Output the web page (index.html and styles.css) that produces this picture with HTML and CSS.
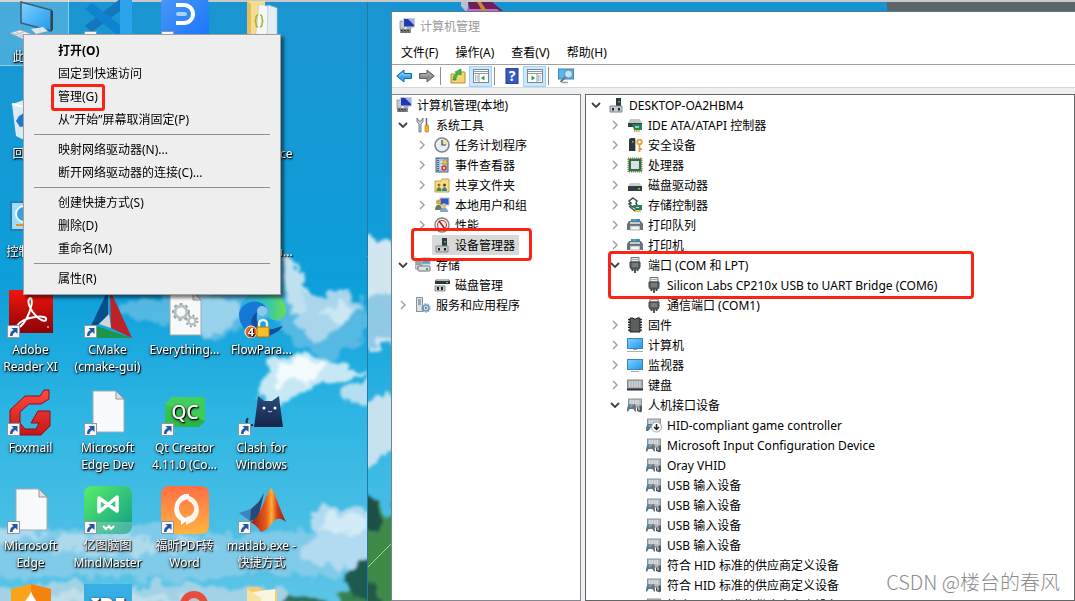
FILE: index.html
```html
<!DOCTYPE html>
<html lang="zh-CN">
<head>
  <meta charset="UTF-8" />
  <meta name="viewport" content="width=device-width, initial-scale=1.0"/>
  <title>计算机管理</title>
  <link rel="stylesheet" href="styles.css">
</head>
<body>

  <!-- icon library -->
  <svg class="defs" aria-hidden="true">
    <defs>
      <linearGradient id="g-red" x1="0" y1="0" x2="0" y2="1"><stop offset="0" stop-color="#f5140c"/><stop offset="1" stop-color="#8a0406"/></linearGradient>
      <linearGradient id="g-fox" x1="0" y1="0" x2="0" y2="1"><stop offset="0" stop-color="#ff4a40"/><stop offset="1" stop-color="#c5161a"/></linearGradient>
      <linearGradient id="g-mind" x1="0" y1="0" x2="1" y2="1"><stop offset="0" stop-color="#58ee68"/><stop offset="1" stop-color="#109a8c"/></linearGradient>
      <linearGradient id="g-pdf" x1="0" y1="0" x2="0" y2="1"><stop offset="0" stop-color="#ff6f45"/><stop offset="1" stop-color="#ffb340"/></linearGradient>
      <linearGradient id="g-blue" x1="0" y1="0" x2="1" y2="1"><stop offset="0" stop-color="#4a97f5"/><stop offset="1" stop-color="#1673fb"/></linearGradient>
      <linearGradient id="g-screen" x1="0" y1="0" x2="1" y2="1"><stop offset="0" stop-color="#7fd2ff"/><stop offset="1" stop-color="#1f98ee"/></linearGradient>
      <linearGradient id="g-cat" x1="0" y1="0" x2="0" y2="1"><stop offset="0" stop-color="#2c4a7c"/><stop offset="1" stop-color="#15254a"/></linearGradient>
      <linearGradient id="g-qt" x1="0" y1="0" x2="1" y2="1"><stop offset="0" stop-color="#3cc95c"/><stop offset="1" stop-color="#28b03e"/></linearGradient>
      <linearGradient id="g-edge" x1="0" y1="0" x2="1" y2="0"><stop offset="0" stop-color="#2aa8e8"/><stop offset=".6" stop-color="#35c5b4"/><stop offset="1" stop-color="#6ade4e"/></linearGradient>
      <linearGradient id="g-mat" x1="0" y1="0" x2="1" y2="0"><stop offset="0" stop-color="#8a1c10"/><stop offset=".45" stop-color="#ef5a1c"/><stop offset=".6" stop-color="#ffb13a"/><stop offset=".75" stop-color="#d8421a"/><stop offset="1" stop-color="#8c1a12"/></linearGradient>

      <symbol id="shortcut" viewBox="0 0 13 13">
        <rect x=".5" y=".5" width="12" height="12" fill="#f4f6f8" stroke="#8c98a4"/>
        <path d="M4.500 3h6v6l-2-2c-2 1-3 2-3 4h-2.500c0-3 1-5 3.500-6z" fill="#2456a4"/>
      </symbol>

      <symbol id="a-pc" viewBox="0 0 48 48">
        <path d="M14 5l30 8v21l-30-8z" fill="url(#g-screen)" stroke="#3f5b70" stroke-width="1.500"/>
        <path d="M44 13l2 1v19l-2 1z" fill="#33434e"/>
        <path d="M24 32l12-2 5 4-12 3z" fill="#dfe5e9"/>
        <path d="M3 36l10-3 14 5-11 4z" fill="#eef2f4" stroke="#9aa7b0" stroke-width=".7"/>
        <path d="M6 36l14 5M9 35l14 5M8 38l9-3M13 40l9-3" stroke="#9aa7b0" stroke-width=".6"/>
      </symbol>
      <symbol id="a-vscode" viewBox="0 0 48 48">
        <path d="M36 0h12v48h-12z" fill="#2aa3ec"/>
        <path d="M36 3v12L8 36l-7-6z" fill="#1277bd"/>
        <path d="M1 13l7-6 28 22v12z" fill="#0e83cf"/>
      </symbol>
      <symbol id="a-d" viewBox="0 0 48 48">
        <rect width="48" height="48" rx="8" fill="url(#g-blue)"/>
        <path d="M15 9h8a9 9 0 0 1 0 18h-8" fill="none" stroke="#fff" stroke-width="4"/>
        <rect x="15" y="16" width="11" height="4" rx="2" fill="#a9d1ff"/>
      </symbol>
      <symbol id="a-folder" viewBox="0 0 48 48">
        <path d="M9 5h18v40h-18z" fill="#f6dc8c"/>
        <path d="M9 5l4 3v38l-4-2z" fill="#e3be5a"/>
        <path d="M21 8l12 3v34h-16z" fill="#f4f6f8" stroke="#c0c8ce" stroke-width=".7"/>
        <path d="M30 9l9 3v33h-10z" fill="#e4edf3" stroke="#b5c0c8" stroke-width=".7"/>
        <path d="M20 19q-2 0-2 3t-1.500 3q1.500 0 1.500 3t2 3M22 19q2 0 2 3t1.500 3q-1.500 0-1.500 3t-2 3" fill="none" stroke="#a8b428" stroke-width="1.500"/>
      </symbol>
      <symbol id="a-folder2" viewBox="0 0 48 48">
        <path d="M9 3h12l3 3h15v40H9z" fill="#f0cf74"/>
        <path d="M15 8l22-3v36H15z" fill="#fbf4dc"/>
        <path d="M9 5l14 9v34L9 44z" fill="#f9e3a0"/>
      </symbol>
      <symbol id="a-bin" viewBox="0 0 48 48">
        <path d="M5 10l12-4 25 3-5 34-22 2-6-3z" fill="#dcebf2"/>
        <path d="M5 10l12 3 25-4" fill="none" stroke="#fff" stroke-width="2"/>
        <path d="M12 22l5-3 4 6-4 1 2 6-6 1-4-6z" fill="#1f78d2"/>
      </symbol>
      <symbol id="a-control" viewBox="0 0 48 48">
        <rect x="4" y="10" width="42" height="28" fill="#9bdcfa" stroke="#2c78b0" stroke-width="2"/>
        <circle cx="17" cy="22" r="8" fill="#3c9ee0" stroke="#f2fbff" stroke-width="2"/>
        <path d="M17 22v-8a8 8 0 0 1 8 8z" fill="#f2fbff"/>
        <path d="M9 33h12" stroke="#f08c2a" stroke-width="2"/>
      </symbol>
      <symbol id="a-adobe" viewBox="0 0 48 48">
        <rect x="2" y="0" width="44" height="43" fill="url(#g-red)"/>
        <path d="M10 36c3-5 11-8 18-9 8-1 12 0 11 3-1 2-6 0-10-4-5-5-9-13-7-17 2-3 4 1 2 8-2 8-6 15-10 19-2 2-5 2-4 0z" fill="none" stroke="#fff" stroke-width="2"/>
        <path d="M41 36v2" stroke="#fff"/>
      </symbol>
      <symbol id="a-cmake" viewBox="0 0 48 48">
        <path d="M24 0L3 44l21-18z" fill="#064f8d"/>
        <path d="M26 0l22 48-21-10z" fill="#be2128"/>
        <path d="M12 36l36 12H3z" fill="#1d9447"/>
        <path d="M25 24l2 14-12-4z" fill="#d2d6da"/>
      </symbol>
      <symbol id="a-gears" viewBox="0 0 48 48">
        <path d="M9 2h23l8 8v35H9z" fill="#f7f8f8" stroke="#a3abb0"/>
        <path d="M32 2v8h8z" fill="#dde0e2" stroke="#8d969b"/>
        <circle cx="20" cy="22" r="6" fill="#f7f8f8" stroke="#b9c0c4" stroke-width="3"/>
        <circle cx="20" cy="22" r="8" fill="none" stroke="#9da5aa" stroke-width="2" stroke-dasharray="3 3"/>
        <circle cx="31" cy="31" r="3.500" fill="#f7f8f8" stroke="#b9c0c4" stroke-width="2.500"/>
        <circle cx="31" cy="31" r="5.500" fill="none" stroke="#9da5aa" stroke-width="2" stroke-dasharray="2 2.300"/>
      </symbol>
      <symbol id="a-edge" viewBox="0 0 48 48">
        <path d="M1 26C1 10 12 1 25 1s23 9 23 19c0 7-5 10-11 10-5 0-7-2-6-4 3-8-4-13-12-12C9 15 4 20 1 26z" fill="url(#g-edge)"/>
        <path d="M1 24c2-8 10-14 19-12 5 1 8 4 8 6-7-1-10 5-9 12 1 8 7 14 15 16-18 5-33-6-33-22z" fill="#1478d4"/>
        <path d="M19 22c-3 13 7 22 22 15l4-1c-6 8-16 12-24 9-9-4-11-16-2-23z" fill="#164e9e"/>
        <circle cx="24" cy="21" r="5" fill="#8cc8ea"/>
        <circle cx="13" cy="42" r="6" fill="#f36c18" stroke="#fff"/>
        <text x="13" y="46" font-size="11" font-weight="700" font-family="Noto Sans" text-anchor="middle" fill="#fff">4</text>
        <path d="M21 37v-3a4 4 0 0 1 8 0v3" fill="none" stroke="#f0f2f4" stroke-width="2.500"/>
        <rect x="19" y="37" width="12" height="10" fill="#f8bf27" stroke="#b27a0a"/>
      </symbol>
      <symbol id="a-fox" viewBox="0 0 48 48">
        <path d="M42 2v9l-8 5H22l-9 8v11l5 6h11l3-6h-8l7-12h12v15l-9 9H13L3 40V22L18 8h15l4-6z" fill="url(#g-fox)" stroke="#8d1014"/>
      </symbol>
      <symbol id="a-page" viewBox="0 0 48 48">
        <path d="M9 3h23l8 8v33H9z" fill="#f8f9fa" stroke="#a3abb0"/>
        <path d="M32 3v8h8z" fill="#dde0e2" stroke="#8d969b"/>
      </symbol>
      <symbol id="a-qt" viewBox="0 0 48 48">
        <path d="M11 9h33v24l-6 6H4V16z" fill="url(#g-qt)"/>
        <path d="M4 16l7-7h33v24z" fill="#4ad864" opacity=".6"/>
        <text x="24" y="31" font-size="19" font-weight="500" font-family="Noto Sans" text-anchor="middle" fill="#fff">QC</text>
      </symbol>
      <symbol id="a-cat" viewBox="0 0 48 48">
        <path d="M16 39l3-22 1-9 6 5h8l7-5 1 9 3 22z" fill="url(#g-cat)"/>
        <path d="M15 37c-6 1-8-3-5-7" fill="none" stroke="#1c2c50" stroke-width="2"/>
        <circle cx="26" cy="20" r="1.500" fill="#fff"/><circle cx="37" cy="20" r="1.500" fill="#fff"/>
        <path d="M30 23l2 1 2-1" fill="none" stroke="#c5cede"/>
      </symbol>
      <symbol id="a-mind" viewBox="0 0 48 48">
        <rect width="48" height="48" rx="8" fill="url(#g-mind)"/>
        <path d="M0 36h48v4a8 8 0 0 1-8 8H8a8 8 0 0 1-8-8z" fill="#fff" opacity=".22"/>
        <path d="M15 26V12l18 13V11L15 26z" fill="none" stroke="#fff" stroke-width="3.500" stroke-linejoin="round"/>
        <path d="M19 40l3 3 3-3 2 3 3-3" fill="none" stroke="#fff" stroke-width="2"/>
      </symbol>
      <symbol id="a-pdf" viewBox="0 0 48 48">
        <rect width="48" height="48" rx="8" fill="url(#g-pdf)"/>
        <path d="M24 8a16 16 0 0 0-10 20c1 3 3 5 6 7v4l8-6c-12-2-13-16-4-19l4-1V8z" fill="#fff"/>
        <path d="M28 10c11 3 14 19 3 26l-6 3 0-8c10-1 11-13 2-16z" fill="#fff5ea"/>
      </symbol>
      <symbol id="a-matlab" viewBox="0 0 48 48">
        <path d="M1 27l12-4 9-9-5 16-5 5z" fill="#3f82bd"/>
        <path d="M13 23l7-6 6-10-6 26-8 2z" fill="#234a78"/>
        <path d="M33 2c4 4 8 20 15 34-6-5-10-4-14 1-3 5-7 8-11 9-3-4-6-8-11-10 11-3 15-28 21-34z" fill="url(#g-mat)"/>
      </symbol>
      <symbol id="a-shield" viewBox="0 0 48 48">
        <path d="M4 5l20-5 20 5v25c0 10-20 18-20 18S4 40 4 30z" fill="#f9a31c"/>
        <path d="M24 0l20 5v25c0 10-20 18-20 18z" fill="#f5830f"/>
        <path d="M24 7c1 6 7 9 7 17h-13c-3-8 5-10 6-17z" fill="#fff"/>
      </symbol>
      <symbol id="a-ide" viewBox="0 0 48 48">
        <rect width="48" height="48" fill="#36aee4"/>
        <text x="24" y="28" font-size="20" font-weight="900" font-family="Noto Sans" text-anchor="middle" fill="#fff">IDE</text>
      </symbol>
      <symbol id="a-ring" viewBox="0 0 48 48">
        <circle cx="33" cy="21" r="14" fill="#e84c3d"/><circle cx="33" cy="21" r="7" fill="#b9c7cf"/>
      </symbol>

      <!-- 16px icons -->
      <symbol id="i-open" viewBox="0 0 16 16"><path d="M4 6l4 4 4-4" fill="none" stroke="#404040" stroke-width="1.800"/></symbol>
      <symbol id="i-closed" viewBox="0 0 16 16"><path d="M6 4l4 4-4 4" fill="none" stroke="#a3a3a3" stroke-width="1.500"/></symbol>
      <symbol id="i-mgmt" viewBox="0 0 16 16">
        <rect x="1" y="3" width="4" height="8" fill="#c5cacd" stroke="#7b858c" stroke-width=".7"/>
        <rect x="4.500" y=".5" width="11" height="8.500" fill="#2438b4" stroke="#c9ced2"/>
        <path d="M9 1h6v6z" fill="#9fb2f4"/>
        <path d="M8 9h4l1 2H7z" fill="#aab2b7"/>
        <rect x="1" y="11" width="11" height="4" fill="#83898d"/><path d="M2 12.500h9M3 14h7" stroke="#3b4044" stroke-dasharray="2 1"/>
      </symbol>
      <symbol id="i-tools" viewBox="0 0 16 16">
        <path d="M2 1v4l2 2v8h2V7l2-2V1L6 4H4z" fill="#c9cfd3" stroke="#5f676c" stroke-width=".8"/>
        <path d="M11.500 1v7" stroke="#62696e" stroke-width="1.500"/><rect x="10" y="8" width="3.500" height="7" rx="1" fill="#f3b21e" stroke="#a56c08" stroke-width=".6"/>
      </symbol>
      <symbol id="i-clock" viewBox="0 0 16 16">
        <circle cx="8" cy="8" r="7" fill="#e6edf4" stroke="#80878c" stroke-width="1.600"/>
        <path d="M8 8V2.500A5.500 5.500 0 0 1 13.500 8z" fill="#f3dca0"/><path d="M8 3v5h4" fill="none" stroke="#3e464c" stroke-width="1.200"/>
      </symbol>
      <symbol id="i-event" viewBox="0 0 16 16">
        <rect x="2" y="1" width="12" height="14" fill="#a9c0dc" stroke="#4b6484"/>
        <path d="M4 1v14" stroke="#2f4a6e" stroke-width="1.500" stroke-dasharray="1 1"/><path d="M6 5h3M6 8h3M6 11h2" stroke="#fff"/>
        <path d="M11 2l3 5H8z" fill="#f7cb2c" stroke="#946c08" stroke-width=".5"/><circle cx="10" cy="11" r="2.700" fill="#d6392d"/><path d="M9 10l2 2m0-2l-2 2" stroke="#fff" stroke-width=".8"/>
      </symbol>
      <symbol id="i-share" viewBox="0 0 16 16">
        <path d="M1 4h6l1-2h7v13H1z" fill="#f7dc86" stroke="#b88f2b" stroke-width=".8"/>
        <circle cx="5" cy="8" r="1.500" fill="#b2622b"/><path d="M2.500 14c0-5 5-5 5 0z" fill="#3b8d48"/>
        <circle cx="10.500" cy="8" r="1.500" fill="#6b3c1d"/><path d="M8 14c0-5 5-5 5 0z" fill="#3876b8"/>
      </symbol>
      <symbol id="i-users" viewBox="0 0 16 16">
        <rect x="6" y="1" width="9" height="7" fill="#2d58cb" stroke="#bcc4ca"/>
        <circle cx="4.500" cy="5" r="2.500" fill="#d7a154"/><path d="M1 13c0-7 7-7 7 0z" fill="#69804c"/>
        <circle cx="10" cy="8.500" r="2.300" fill="#e7bb82"/><path d="M6 15c0-6 8-6 8 0z" fill="#7ba6cf"/>
      </symbol>
      <symbol id="i-perf" viewBox="0 0 16 16">
        <circle cx="8" cy="8" r="7" fill="#f3f4f5" stroke="#7d8488" stroke-width="1.400"/><circle cx="8" cy="8" r="4.500" fill="none" stroke="#d03a32" stroke-width="1.200"/><path d="M5 4l6 8" stroke="#a3201b" stroke-width="1.500"/>
      </symbol>
      <symbol id="i-dev" viewBox="0 0 16 16">
        <rect x="8" y="1" width="5" height="9" fill="#33393c"/><rect x="10" y="4" width="2" height="1.500" fill="#43c14c"/>
        <path d="M2 9h12v6H2z" fill="#c6cbce" stroke="#7f878b"/><rect x="4" y="11" width="2" height="2.500" fill="#222"/><rect x="10" y="11" width="2" height="2.500" fill="#222"/>
      </symbol>
      <symbol id="i-storage" viewBox="0 0 16 16">
        <path d="M0 3h7v9H0z" fill="#c8cdd1" stroke="#80878c" stroke-width=".7"/><path d="M1 5h5M1 7h5" stroke="#6d7478"/>
        <rect x="7" y="1" width="8" height="6" fill="#4fa4d9" stroke="#9eb1bd"/><rect x="3" y="9" width="12" height="5" rx="1" fill="#dfe2e4" stroke="#687075"/><rect x="11" y="11" width="2" height="2" fill="#2cb340"/>
      </symbol>
      <symbol id="i-diskmgmt" viewBox="0 0 16 16">
        <path d="M3 2h11l2 2v3H1V4z" fill="#2f3538"/><path d="M3 2h11l1 2H2z" fill="#b8bdc0"/><rect x="12" y="5" width="2" height="1" fill="#4be653"/>
        <path d="M1 9h10v5H1z" fill="#d0d4d6" stroke="#7f878b"/><rect x="3" y="10" width="2" height="3" fill="#222"/><rect x="7" y="10" width="2" height="3" fill="#222"/>
      </symbol>
      <symbol id="i-service" viewBox="0 0 16 16">
        <rect x="1.500" y=".5" width="6" height="14" fill="#dce2e6" stroke="#88949c"/><path d="M3 3h3M3 5h3M3 7h3" stroke="#5d6a72"/>
        <circle cx="11" cy="11" r="3" fill="#d5e7f6" stroke="#6d93b5" stroke-width="1.500"/><circle cx="11" cy="11" r="4.300" fill="none" stroke="#6d93b5" stroke-dasharray="1.500 1.500"/><circle cx="11" cy="11" r="1" fill="#3d6e9d"/>
      </symbol>
      <symbol id="i-ide" viewBox="0 0 16 16">
        <path d="M3 2h10l2 4H1z" fill="#bfc4c7"/><path d="M1 6h14v4H1z" fill="#393f42"/>
        <path d="M5 7h10v6H7z" fill="#25815d"/><path d="M8 9h4v2H8z" fill="#8fd0ac"/><path d="M7 14h6" stroke="#e6ab25" stroke-width="2" stroke-dasharray="1.500 .6"/>
      </symbol>
      <symbol id="i-security" viewBox="0 0 16 16">
        <path d="M2 2l2-1h4v13H2z" fill="#303639"/><rect x="5" y="4" width="1.500" height="1.500" fill="#48dc50"/><path d="M8.500 2v12" stroke="#b0b7ba"/>
        <circle cx="12.500" cy="5" r="2.300" fill="none" stroke="#dda03c" stroke-width="1.800"/><path d="M12.500 7v8M13 12h2" stroke="#dda03c" stroke-width="1.800"/>
      </symbol>
      <symbol id="i-cpu" viewBox="0 0 16 16">
        <rect x="1" y="1" width="14" height="14" fill="none" stroke="#c49c39" stroke-width="1.500" stroke-dasharray="1 1"/>
        <rect x="1.500" y="1.500" width="13" height="13" fill="#2f6d4c"/><rect x="4" y="4" width="8" height="8" fill="#dde0df"/>
      </symbol>
      <symbol id="i-drive" viewBox="0 0 16 16"><path d="M3 6h10l2 3H1z" fill="#cbd0d3"/><path d="M1 9h14v5H1z" fill="#363c40"/><rect x="11" y="11" width="2" height="1.500" fill="#4de653"/></symbol>
      <symbol id="i-storctl" viewBox="0 0 16 16">
        <path d="M6 1l4 3-1 2 1 2-4 2-4-3 2-1-2-2z" fill="#fff" stroke="#42494d" stroke-width="1.500"/>
        <path d="M2 9l6 5" stroke="#42494d" stroke-width="1.500"/><path d="M6 8h9v5H8z" fill="#25815d"/><path d="M9 10h3v1H9z" fill="#b9e5cc"/><path d="M8 14h6" stroke="#e6ab25" stroke-width="2" stroke-dasharray="1.500 .6"/>
      </symbol>
      <symbol id="i-printer" viewBox="0 0 16 16">
        <path d="M4 2h9v3H4z" fill="#2790e4"/><path d="M6 2h3v3H6z" fill="#3cc764"/>
        <path d="M2 4h12l2 3v6h-3V9H3v4H0V7z" fill="#697176"/><path d="M3 6h10" stroke="#c5cacd" stroke-width="2"/><path d="M4 9h8l1 4H3z" fill="#f3f5f6" stroke="#8f979c" stroke-width=".7"/>
      </symbol>
      <symbol id="i-port" viewBox="0 0 16 16">
        <path d="M4 .5h8V5H4z" fill="#e9ebec" stroke="#717678"/><path d="M5.500 2.500h5" stroke="#666" stroke-dasharray="1 1"/>
        <path d="M3 5h10v5l-1 2H4l-1-2z" fill="#5b6063" stroke="#3f4446"/><path d="M5 7h6M5 9h6" stroke="#a0a5a7" stroke-width=".8"/><path d="M5.500 12v2M8 12v4M10.500 12v2" stroke="#3f4446" stroke-width="1.800"/>
      </symbol>
      <symbol id="i-firmware" viewBox="0 0 16 16">
        <path d="M3 1h3l1 1h2l1-1h3v14H3z" fill="#5c5f60" stroke="#202122"/><path d="M2 2v13M14 2v13" stroke="#202122" stroke-width="2" stroke-dasharray="1.300 1.300"/>
      </symbol>
      <symbol id="i-pc" viewBox="0 0 16 16"><rect x=".5" y="1.500" width="15" height="10" fill="url(#g-screen)" stroke="#3d85b4"/><path d="M6 12h4v1H6z" fill="#8ca1ae"/><path d="M0 14.500h16" stroke="#a5b5c0"/></symbol>
      <symbol id="i-monitor" viewBox="0 0 16 16"><rect x=".5" y="2.500" width="15" height="10" fill="url(#g-screen)" stroke="#3d85b4"/><path d="M4 14.500h8" stroke="#9aadb9"/></symbol>
      <symbol id="i-keyboard" viewBox="0 0 16 16"><rect x=".5" y="3" width="15" height="9" fill="#a8afb5" stroke="#7e878e"/><path d="M2 5h12M2 7h12M2 9h12" stroke="#f4f6f7" stroke-dasharray="1.500 1"/><path d="M0 12.500h16" stroke="#292f34" stroke-width="2"/></symbol>
      <symbol id="i-hid" viewBox="0 0 16 16">
        <rect x="1.500" y="2" width="13" height="8" fill="#b5bcc2" stroke="#8b949b"/><path d="M3 4h10M3 6h10" stroke="#fff" stroke-dasharray="1.500 1"/>
        <path d="M0 15c0-5 1-8 3-8l2 1 2-1c2 0 2 3 2 8l-1.500-1L6.500 12h-4l-1 2z" fill="#66737d"/><circle cx="4" cy="9" r="1.600" fill="#3ab0ec"/><circle cx="7" cy="8.500" r="1" fill="#ea5a2d"/>
        <path d="M10 14v-3q1-2 1.500 0v2q1 2 1-1V9q2-2 2.500 1v4q-1 2-2.500 1z" fill="#4a555d"/>
      </symbol>
      <symbol id="i-game" viewBox="0 0 16 16">
        <rect x="1.500" y="2" width="13" height="8" fill="#b5bcc2" stroke="#8b949b"/><path d="M3 4h10M3 6h10" stroke="#fff" stroke-dasharray="1.500 1"/>
        <path d="M0 14c0-5 1-7 3-7h3l-2 5-2 2z" fill="#64707a"/><circle cx="3.500" cy="9" r="1.300" fill="#3ab0ec"/>
        <circle cx="10.500" cy="10" r="5" fill="#fff" stroke="#8a9297" stroke-width=".8"/><path d="M10.500 7v5.500M8 10l2.500 2.500L13 10" fill="none" stroke="#222" stroke-width="1.500"/>
      </symbol>
      <symbol id="i-back" viewBox="0 0 16 16"><path d="M8 2v3.500h7.500v5H8V14L.7 8z" fill="#39a9ea" stroke="#1767a6"/><path d="M3 8l4-3v2h7" fill="none" stroke="#9bdbfa"/></symbol>
      <symbol id="i-fwd" viewBox="0 0 16 16"><path d="M8 2v3.500H.5v5H8V14l7.300-6z" fill="#8e8e8e" stroke="#606060"/><path d="M2 7h7V5l3 3" fill="none" stroke="#bcbcbc"/></symbol>
      <symbol id="i-up" viewBox="0 0 16 16"><path d="M1 6h6l1-2h7v11H1z" fill="#f4d676" stroke="#b9903a"/><path d="M3 12c0-4 2-6 4-7L5 4l6-3v6L9 6c-3 2-3 4-3 6z" fill="#42bd3d" stroke="#247e26" stroke-width=".6"/></symbol>
      <symbol id="i-tree" viewBox="0 0 16 16"><rect x=".5" y="1.500" width="15" height="13" fill="#fff" stroke="#7b8790"/><path d="M1 3.500h14M1 5.500h14" stroke="#8d99a1" stroke-width="1.200"/><path d="M6 6v8" stroke="#8d99a1"/><path d="M2 8h3M2 10h3M2 12h3" stroke="#4a79a8" stroke-dasharray="1 .7"/><path d="M11.500 7.500v5L8 10z" fill="#2fa336"/></symbol>
      <symbol id="i-pane" viewBox="0 0 16 16"><rect x=".5" y="1.500" width="15" height="13" fill="#fff" stroke="#7b8790"/><path d="M1 3.500h14M1 5.500h14" stroke="#8d99a1" stroke-width="1.200"/><path d="M10 6v8" stroke="#8d99a1"/><path d="M11 8h3M11 10h3M11 12h3" stroke="#4a79a8" stroke-dasharray="1 .7"/><path d="M4.500 7.500v5L8 10z" fill="#2fa336"/></symbol>
      <symbol id="i-help" viewBox="0 0 16 16"><rect x="2" y="0" width="12" height="16" fill="#3859bd" stroke="#22368a"/><text x="8" y="13" font-size="14" font-weight="700" font-family="Noto Sans" text-anchor="middle" fill="#fff">?</text></symbol>
      <symbol id="i-scan" viewBox="0 0 16 16"><rect x=".5" y="1" width="15" height="10" fill="#55b7f0" stroke="#3d85b4"/><path d="M4 14.500h6" stroke="#8a9ca8" stroke-width="1.500"/><circle cx="10.500" cy="6" r="4" fill="#bde5fb" stroke="#738b9a"/><path d="M7.500 9l-5 5" stroke="#667680" stroke-width="1.800"/></symbol>
    </defs>
  </svg>

  <div class="desktop">
    <svg class="wallpaper" viewBox="0 0 391 601" preserveAspectRatio="xMinYMin slice" aria-hidden="true">
      <defs>
        <linearGradient id="sky" x1="0" y1="0" x2="0" y2="1">
          <stop offset="0" stop-color="#1b95d2"/><stop offset=".48" stop-color="#0d9fda"/><stop offset=".7" stop-color="#2fb6e3"/><stop offset="1" stop-color="#5cc4e6"/>
        </linearGradient>
        <filter id="paint" x="-20%" y="-20%" width="140%" height="140%">
          <feTurbulence type="fractalNoise" baseFrequency=".06" numOctaves="5" seed="7" result="n"/>
          <feDisplacementMap in="SourceGraphic" in2="n" scale="22" xChannelSelector="R" yChannelSelector="G"/>
          <feGaussianBlur stdDeviation="1.500"/>
        </filter>
      </defs>
      <rect width="391" height="601" fill="url(#sky)"/>
      <g filter="url(#paint)">
        <path d="M120 304l60-12 90-40 20 16 20 30 50 0 10 20-14 26-30 16-30-16-20-24-60 16-40-14-56-4z" fill="#6fc0e6" opacity=".7"/>
        <path d="M190 296l40 0 10 24-30 18-30-14z" fill="#b5dcee" opacity=".7"/>
        <path d="M284 255l14 8 12 28 34 12-10 14-44-4z" fill="#bfe0ef"/>
        <path d="M304 296l36-4 24 14-20 14-30 26-18-20z" fill="#a9d6ec"/>
        <path d="M316 312l26-10 16 8-22 14z" fill="#cbe7f3"/>
        <path d="M270 362l20-8 46 8 30 10-28 10-34 6-20 16-28-6z" fill="#c6e8f5"/>
        <path d="M278 364l18-5 30 7-10 10-40 8z" fill="#f4fbfd"/>
        <path d="M342 388l36-14v36l-26-6z" fill="#b4dff0"/>
        <path d="M-10 522l70 8 90-4 60 8 90-2 60-10 20 40-50 16-70-6-90 10-110-6-70 6z" fill="#8ccdea" opacity=".8"/>
        <path d="M-10 526l30 2 30 8-30 8-30-2zM60 534l60 0 60 4 40 10-80 6-90-4z" fill="#b9ddef" opacity=".8"/>
        <path d="M310 510l34-5 36 8v42l-32 14-36-6-14-16 20-10z" fill="#b2daf0"/>
        <path d="M326 512l30 3 14 12-24 8-24-6z" fill="#d2ebf7"/>
        <path d="M-10 590l70-8 50 4 60-2 60 6 60-2v22H-10z" fill="#a3d2e6"/>
        <path d="M50 596l60-6 60 6 50 8H50z" fill="#c0dfeb"/>
        <path d="M346 610l0-30 8-16 14-5 12 10v46z" fill="#1f5a50"/>
        <path d="M280 606l10-12 28 4 14 12z" fill="#2d6a55"/>
        <path d="M336 610l8-18 20 6 12 16z" fill="#39804f"/>
      </g>
      <svg x="367" y="0" width="24" height="601">
        <rect width="24" height="601" fill="url(#sky)"/>
        <g filter="url(#paint)">
          <path d="M-10 236l24-2 30 16v80l-30 18h-24z" fill="#d2e6f0"/>
          <path d="M-10 304l50-18v50l-50 12z" fill="#8fc9e4"/>
          <path d="M-10 410l50-24v60l-50 30z" fill="#c5e2ee"/>
          <path d="M-16 496l24 0 8 20 30-20v130h-62z" fill="#3f8a4a"/>
          <path d="M-16 490l24 6 6 30-30 10z" fill="#1b4f45"/>
          <path d="M-16 580l26 6 4 20-30 4z" fill="#24584a"/>
        </g>
        <path d="M0 568l24-24" stroke="#b8cf9a"/>
        <path d="M.5 0v601" stroke="#2679a4"/>
      </svg>
    </svg>

    <div class="top-edge"></div>
    <div class="top-dark"></div>
    <svg class="archive" viewBox="0 0 42 12" aria-hidden="true">
      <path d="M0 0l7 0 0 12-7-8z" fill="#b9bfd0"/><path d="M7 0h24l11 9v3H10z" fill="#6f2058"/><path d="M5 7l31 0 6 5H8z" fill="#d85fc0"/><path d="M16 0h4l8 12h-5z" fill="#c78a2c"/>
    </svg>

    <ul class="icons">
      <li class="app selected"><svg><use href="#a-pc"/></svg><span>此电脑</span></li>
      <li class="app"><svg><use href="#a-vscode"/></svg><svg class="arrow"><use href="#shortcut"/></svg></li>
      <li class="app"><svg><use href="#a-d"/></svg><svg class="arrow"><use href="#shortcut"/></svg></li>
      <li class="app"><svg><use href="#a-folder"/></svg></li>

      <li class="app"><svg><use href="#a-bin"/></svg><span>回收站</span></li>
      <li class="app"></li>
      <li class="app"></li>
      <li class="app"><svg></svg><span>Workspace</span></li>

      <li class="app"><svg><use href="#a-control"/></svg><span>控制面板</span></li>
      <li class="app"></li>
      <li class="app"></li>
      <li class="app"><svg></svg><span>Manual u...</span></li>

      <li class="app"><svg><use href="#a-adobe"/></svg><svg class="arrow"><use href="#shortcut"/></svg><span>Adobe<br>Reader XI</span></li>
      <li class="app"><svg><use href="#a-cmake"/></svg><svg class="arrow"><use href="#shortcut"/></svg><span>CMake<br>(cmake-gui)</span></li>
      <li class="app"><svg><use href="#a-gears"/></svg><span>Everything...</span></li>
      <li class="app"><svg><use href="#a-edge"/></svg><span>FlowPara...</span></li>

      <li class="app"><svg><use href="#a-fox"/></svg><svg class="arrow"><use href="#shortcut"/></svg><span>Foxmail</span></li>
      <li class="app"><svg><use href="#a-page"/></svg><svg class="arrow"><use href="#shortcut"/></svg><span>Microsoft<br>Edge Dev</span></li>
      <li class="app"><svg><use href="#a-qt"/></svg><svg class="arrow"><use href="#shortcut"/></svg><span>Qt Creator<br>4.11.0 (Co...</span></li>
      <li class="app"><svg><use href="#a-cat"/></svg><svg class="arrow"><use href="#shortcut"/></svg><span>Clash for<br>Windows</span></li>

      <li class="app"><svg><use href="#a-page"/></svg><svg class="arrow"><use href="#shortcut"/></svg><span>Microsoft<br>Edge</span></li>
      <li class="app"><svg><use href="#a-mind"/></svg><svg class="arrow"><use href="#shortcut"/></svg><span>亿图脑图<br>MindMaster</span></li>
      <li class="app"><svg><use href="#a-pdf"/></svg><svg class="arrow"><use href="#shortcut"/></svg><span>福昕PDF转<br>Word</span></li>
      <li class="app"><svg><use href="#a-matlab"/></svg><svg class="arrow"><use href="#shortcut"/></svg><span>matlab.exe -<br>快捷方式</span></li>

      <li class="app"><svg><use href="#a-shield"/></svg></li>
      <li class="app"><svg><use href="#a-ide"/></svg></li>
      <li class="app"><svg><use href="#a-ring"/></svg></li>
      <li class="app"><svg><use href="#a-folder2"/></svg></li>
    </ul>

    <div class="context-menu">
      <button class="default">打开(O)</button>
      <button>固定到快速访问</button>
      <button class="marked">管理(G)</button>
      <button>从“开始”屏幕取消固定(P)</button>
      <hr>
      <button>映射网络驱动器(N)...</button>
      <button>断开网络驱动器的连接(C)...</button>
      <hr>
      <button>创建快捷方式(S)</button>
      <button>删除(D)</button>
      <button>重命名(M)</button>
      <hr>
      <button>属性(R)</button>
    </div>

    <div class="window">
      <div class="titlebar"><svg class="ico"><use href="#i-mgmt"/></svg>计算机管理</div>
      <div class="menubar">
        <button>文件(F)</button>
        <button>操作(A)</button>
        <button>查看(V)</button>
        <button>帮助(H)</button>
      </div>
      <div class="toolbar">
        <button aria-label="后退"><svg class="ico"><use href="#i-back"/></svg></button>
        <button aria-label="前进"><svg class="ico"><use href="#i-fwd"/></svg></button>
        <i class="sep"></i>
        <button aria-label="上一级"><svg class="ico"><use href="#i-up"/></svg></button>
        <button class="on" aria-label="显示/隐藏控制台树"><svg class="ico"><use href="#i-tree"/></svg></button>
        <i class="sep"></i>
        <button aria-label="帮助"><svg class="ico"><use href="#i-help"/></svg></button>
        <button class="on" aria-label="显示/隐藏操作窗格"><svg class="ico"><use href="#i-pane"/></svg></button>
        <i class="sep"></i>
        <button aria-label="扫描检测硬件改动"><svg class="ico"><use href="#i-scan"/></svg></button>
      </div>

      <div class="panes">
        <div class="pane console">
          <ul class="tree">
            <li><div class="row root"><span class="node"><svg class="ico"><use href="#i-mgmt"/></svg>计算机管理(本地)</span></div></li>
            <li>
              <div class="row"><button aria-label="折叠"><svg class="ico"><use href="#i-open"/></svg></button><span class="node"><svg class="ico"><use href="#i-tools"/></svg>系统工具</span></div>
              <ul>
                <li class="row"><button aria-label="展开"><svg class="ico"><use href="#i-closed"/></svg></button><span class="node"><svg class="ico"><use href="#i-clock"/></svg>任务计划程序</span></li>
                <li class="row"><button aria-label="展开"><svg class="ico"><use href="#i-closed"/></svg></button><span class="node"><svg class="ico"><use href="#i-event"/></svg>事件查看器</span></li>
                <li class="row"><button aria-label="展开"><svg class="ico"><use href="#i-closed"/></svg></button><span class="node"><svg class="ico"><use href="#i-share"/></svg>共享文件夹</span></li>
                <li class="row"><button aria-label="展开"><svg class="ico"><use href="#i-closed"/></svg></button><span class="node"><svg class="ico"><use href="#i-users"/></svg>本地用户和组</span></li>
                <li class="row"><button aria-label="展开"><svg class="ico"><use href="#i-closed"/></svg></button><span class="node"><svg class="ico"><use href="#i-perf"/></svg>性能</span></li>
                <li class="row leaf"><span class="node current"><svg class="ico"><use href="#i-dev"/></svg>设备管理器</span></li>
              </ul>
            </li>
            <li>
              <div class="row"><button aria-label="折叠"><svg class="ico"><use href="#i-open"/></svg></button><span class="node"><svg class="ico"><use href="#i-storage"/></svg>存储</span></div>
              <ul>
                <li class="row leaf"><span class="node"><svg class="ico"><use href="#i-diskmgmt"/></svg>磁盘管理</span></li>
              </ul>
            </li>
            <li class="row"><button aria-label="展开"><svg class="ico"><use href="#i-closed"/></svg></button><span class="node"><svg class="ico"><use href="#i-service"/></svg>服务和应用程序</span></li>
          </ul>
        </div>

        <div class="pane devices">
          <ul class="tree">
            <li>
              <div class="row"><button aria-label="折叠"><svg class="ico"><use href="#i-open"/></svg></button><span class="node"><svg class="ico"><use href="#i-dev"/></svg>DESKTOP-OA2HBM4</span></div>
              <ul>
                <li class="row"><button aria-label="展开"><svg class="ico"><use href="#i-closed"/></svg></button><span class="node"><svg class="ico"><use href="#i-ide"/></svg>IDE ATA/ATAPI 控制器</span></li>
                <li class="row"><button aria-label="展开"><svg class="ico"><use href="#i-closed"/></svg></button><span class="node"><svg class="ico"><use href="#i-security"/></svg>安全设备</span></li>
                <li class="row"><button aria-label="展开"><svg class="ico"><use href="#i-closed"/></svg></button><span class="node"><svg class="ico"><use href="#i-cpu"/></svg>处理器</span></li>
                <li class="row"><button aria-label="展开"><svg class="ico"><use href="#i-closed"/></svg></button><span class="node"><svg class="ico"><use href="#i-drive"/></svg>磁盘驱动器</span></li>
                <li class="row"><button aria-label="展开"><svg class="ico"><use href="#i-closed"/></svg></button><span class="node"><svg class="ico"><use href="#i-storctl"/></svg>存储控制器</span></li>
                <li class="row"><button aria-label="展开"><svg class="ico"><use href="#i-closed"/></svg></button><span class="node"><svg class="ico"><use href="#i-printer"/></svg>打印队列</span></li>
                <li class="row"><button aria-label="展开"><svg class="ico"><use href="#i-closed"/></svg></button><span class="node"><svg class="ico"><use href="#i-printer"/></svg>打印机</span></li>
                <li>
                  <div class="row"><button aria-label="折叠"><svg class="ico"><use href="#i-open"/></svg></button><span class="node"><svg class="ico"><use href="#i-port"/></svg>端口 (COM 和 LPT)</span></div>
                  <ul>
                    <li class="row leaf"><span class="node"><svg class="ico"><use href="#i-port"/></svg>Silicon Labs CP210x USB to UART Bridge (COM6)</span></li>
                    <li class="row leaf"><span class="node"><svg class="ico"><use href="#i-port"/></svg>通信端口 (COM1)</span></li>
                  </ul>
                </li>
                <li class="row"><button aria-label="展开"><svg class="ico"><use href="#i-closed"/></svg></button><span class="node"><svg class="ico"><use href="#i-firmware"/></svg>固件</span></li>
                <li class="row"><button aria-label="展开"><svg class="ico"><use href="#i-closed"/></svg></button><span class="node"><svg class="ico"><use href="#i-pc"/></svg>计算机</span></li>
                <li class="row"><button aria-label="展开"><svg class="ico"><use href="#i-closed"/></svg></button><span class="node"><svg class="ico"><use href="#i-monitor"/></svg>监视器</span></li>
                <li class="row"><button aria-label="展开"><svg class="ico"><use href="#i-closed"/></svg></button><span class="node"><svg class="ico"><use href="#i-keyboard"/></svg>键盘</span></li>
                <li>
                  <div class="row"><button aria-label="折叠"><svg class="ico"><use href="#i-open"/></svg></button><span class="node"><svg class="ico"><use href="#i-hid"/></svg>人机接口设备</span></div>
                  <ul>
                    <li class="row leaf"><span class="node"><svg class="ico"><use href="#i-game"/></svg>HID-compliant game controller</span></li>
                    <li class="row leaf"><span class="node"><svg class="ico"><use href="#i-hid"/></svg>Microsoft Input Configuration Device</span></li>
                    <li class="row leaf"><span class="node"><svg class="ico"><use href="#i-hid"/></svg>Oray VHID</span></li>
                    <li class="row leaf"><span class="node"><svg class="ico"><use href="#i-hid"/></svg>USB 输入设备</span></li>
                    <li class="row leaf"><span class="node"><svg class="ico"><use href="#i-hid"/></svg>USB 输入设备</span></li>
                    <li class="row leaf"><span class="node"><svg class="ico"><use href="#i-hid"/></svg>USB 输入设备</span></li>
                    <li class="row leaf"><span class="node"><svg class="ico"><use href="#i-hid"/></svg>USB 输入设备</span></li>
                    <li class="row leaf"><span class="node"><svg class="ico"><use href="#i-hid"/></svg>符合 HID 标准的供应商定义设备</span></li>
                    <li class="row leaf"><span class="node"><svg class="ico"><use href="#i-hid"/></svg>符合 HID 标准的供应商定义设备</span></li>
                    <li class="row leaf"><span class="node"><svg class="ico"><use href="#i-hid"/></svg>符合 HID 标准的供应商定义设备</span></li>
                  </ul>
                </li>
              </ul>
            </li>
          </ul>
        </div>
      </div>
    </div>

    <div class="mark mark-manager"></div>
    <div class="mark mark-port"></div>
    <div class="watermark">CSDN @楼台的春风</div>
  </div>

</body>
</html>
```
FILE: styles.css
```css
*,
*::after {
  box-sizing: border-box;
}

body {
  margin: 0;
  font-family: "Noto Sans", "Noto Sans CJK SC", sans-serif;
  font-size: 12px;
  color: #000;
}

ul {
  list-style: none;
  margin: 0;
  padding: 0;
}

button {
  font: inherit;
  color: inherit;
  background: none;
  border: none;
  padding: 0;
}

.defs {
  position: absolute;
  width: 0;
  height: 0;
}

.ico {
  width: 16px;
  height: 16px;
  flex: none;
  display: block;
}

/* desktop */
.desktop {
  position: relative;
  height: 100vh;
  overflow: hidden;
  background: #1893d1;
}

.wallpaper {
  position: absolute;
  left: 0;
  top: 0;
  height: 100%;
}

.top-edge {
  position: absolute;
  left: 0;
  right: 0;
  top: 0;
  height: 2px;
  background: #c8c8c8;
}

.top-dark {
  position: absolute;
  left: 887px;
  right: 0;
  top: 2px;
  height: 9px;
  background: #5c6468;
}

.archive {
  position: absolute;
  left: 461px;
  top: 2px;
  width: 42px;
}

.icons {
  position: absolute;
  left: -8px;
  top: -4px;
  display: grid;
  grid-template-columns: repeat(4, 77px);
  grid-auto-rows: 98px;
}

.app {
  position: relative;
  display: flex;
  flex-direction: column;
  align-items: center;
  gap: 3px;
  line-height: 17px;
  text-align: center;
  white-space: nowrap;
  color: #fff;
  text-shadow: 1px 1px 1px #000, 0 1px 3px #000;
}

.app svg {
  width: 48px;
  height: 48px;
  flex: none;
}

.app .arrow {
  position: absolute;
  left: 15px;
  top: 35px;
  width: 13px;
  height: 13px;
}

.app.selected {
  height: 70px;
  background: rgba(255, 255, 255, 0.2);
  border: 1px solid rgba(255, 255, 255, 0.4);
}

/* context menu */
.context-menu {
  position: absolute;
  left: 23px;
  top: 34px;
  width: 258px;
  padding: 4px 0;
  background: #eee;
  border: 1px solid #a0a0a0;
  box-shadow: 3px 3px 3px rgba(0, 0, 0, 0.5);
}

.context-menu button {
  position: relative;
  display: block;
  width: 100%;
  height: 23px;
  padding-left: 34px;
  line-height: 23px;
  text-align: left;
}

.context-menu .default {
  font-weight: bold;
}

.context-menu .marked::after {
  content: "";
  position: absolute;
  left: 27px;
  top: -1px;
  width: 54px;
  height: 27px;
  border: 3px solid #fc2314;
  border-radius: 3px;
}

.context-menu hr {
  height: 1px;
  margin: 3px 10px;
  border: none;
  background: #919191;
}

/* window */
.window {
  position: absolute;
  left: 391px;
  right: 0;
  top: 11px;
  bottom: 0;
  display: flex;
  flex-direction: column;
  background: #f0f0f0;
  border-left: 1px solid #6d8493;
  border-top: 1px solid #4c7b96;
}

.titlebar {
  display: flex;
  align-items: center;
  gap: 5px;
  height: 28px;
  padding-left: 7px;
  background: #fff;
  color: #999;
}

.menubar {
  display: flex;
  gap: 17px;
  height: 25px;
  padding-left: 9px;
  background: #fff;
  border-bottom: 1px solid #a0a0a0;
}

.toolbar {
  display: flex;
  align-items: center;
  height: 23px;
  background: #fff;
  border-bottom: 1px solid #d9d9d9;
}

.toolbar button {
  display: flex;
  align-items: center;
  justify-content: center;
  width: 23px;
  height: 21px;
}

.toolbar .on {
  background: #cce8ff;
  border: 1px solid #99d1ff;
}

.toolbar .sep {
  width: 1px;
  height: 18px;
  margin: 0 5px 0 2px;
  background: #8d8d8d;
}

.panes {
  flex: 1;
  min-height: 0;
  display: grid;
  grid-template-columns: 189px 1fr;
  gap: 4px;
  padding-top: 6px;
}

.pane {
  background: #fff;
  border: 1px solid #828790;
  overflow: hidden;
}

.console {
  border-left: none;
}

.console .tree {
  padding-left: 3px;
}

.devices {
  border-color: #646464;
}

.devices .tree {
  padding-left: 2px;
}

.tree ul {
  padding-left: 19px;
}

.row {
  display: flex;
  align-items: center;
  gap: 2px;
  height: 20px;
  white-space: nowrap;
}

.row.root {
  margin-left: -1px;
}

.row.leaf {
  padding-left: 18px;
}

.node {
  display: flex;
  align-items: center;
  gap: 5px;
  height: 20px;
  padding: 0 4px 0 2px;
}

.node.current {
  background: #d9d9d9;
}

/* red marks over the windows */
.mark {
  position: absolute;
  border: 3px solid #fc2314;
  border-radius: 4px;
}

.mark-manager {
  left: 411px;
  top: 228px;
  width: 121px;
  height: 33px;
}

.mark-port {
  left: 608px;
  top: 251px;
  width: 366px;
  height: 48px;
}

.watermark {
  position: absolute;
  right: 15px;
  bottom: 5px;
  font-family: "Noto Sans CJK SC", sans-serif;
  font-size: 20px;
  font-weight: 300;
  color: #8c8c8c;
}
```
